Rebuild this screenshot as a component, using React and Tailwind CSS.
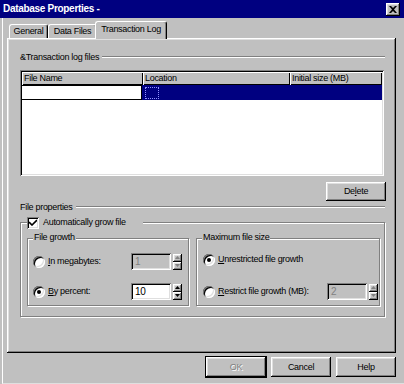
import React from "react";

const font = "font-['Liberation_Sans',Arial,sans-serif]";
const raised = "shadow-[inset_-1px_-1px_0_#000,inset_1px_1px_0_#fff,inset_-2px_-2px_0_#808080,inset_2px_2px_0_#dfdfdf]";
const sunken = "shadow-[inset_1px_1px_0_#808080,inset_-1px_-1px_0_#fff,inset_2px_2px_0_#000,inset_-2px_-2px_0_#dfdfdf]";
const etched = "border border-[#808080] shadow-[inset_1px_1px_0_#fff,1px_1px_0_#fff]";

const HeaderLine = ({ children }) => (
    <div className="flex items-center h-[12px]">
        <span className="leading-none">{children}</span>
        <div className="flex-1 ml-[3px] h-[2px] border-t border-t-[#808080] border-b border-b-white" />
    </div>
);

const Tab = ({ children, w, selected }) => (
    <div
        className={`${w} ${selected ? "h-[18px] -mx-[2px] -mb-[1px] pb-[2px]" : "h-[14px]"} relative z-10 bg-[#c0c0c0] rounded-t-[3px] border-t border-l border-t-white border-l-white border-r border-r-black shadow-[inset_-1px_0_0_#808080] flex items-center justify-center leading-none`}
    >
        {children}
    </div>
);

const Arrow = ({ up, disabled }) => (
    <div className={`h-[8px] bg-[#c0c0c0] ${raised} flex items-center justify-center`}>
        <svg width="5" height="3" viewBox="0 0 5 3">
            <path d={up ? "M2.5 0L5 3H0z" : "M0 0h5L2.5 3z"} fill={disabled ? "#808080" : "#000"} />
        </svg>
    </div>
);

const Spin = ({ value, disabled }) => (
    <div className="flex items-center gap-[2px]">
        <div
            className={`w-[40px] h-[17px] ${sunken} ${disabled ? "bg-[#c0c0c0] text-[#808080]" : "bg-white text-black"} flex items-center px-[4px] text-[10px] leading-none`}
        >
            {value}
        </div>
        <div className="flex flex-col w-[9px]">
            <Arrow up disabled={disabled} />
            <Arrow disabled={disabled} />
        </div>
    </div>
);

const Radio = ({ checked, children }) => (
    <div className="flex items-center">
        <span className={`w-[12px] h-[12px] shrink-0 rounded-full bg-white ${sunken} flex items-center justify-center`}>
            {checked && <span className="w-[4px] h-[4px] rounded-full bg-black" />}
        </span>
        <span className="ml-[3px] leading-none">{children}</span>
    </div>
);

const HeadCell = ({ w, children }) => (
    <div className={`${w} h-full flex items-center pl-[2px] leading-none shadow-[inset_1px_1px_0_#fff,inset_-1px_-1px_0_#000]`}>
        {children}
    </div>
);

const Button = ({ children, disabled, isDefault, w = "w-[60px]", h = "h-[20px]" }) => (
    <div
        className={`${w} ${h} bg-[#c0c0c0] ${raised} ${isDefault ? "outline outline-1 outline-black" : ""} flex items-center justify-center leading-none ${disabled ? "text-[#808080] [text-shadow:1px_1px_0_#fff]" : ""}`}
    >
        {children}
    </div>
);

const App = () => {
    return (
        <div className={`w-[404px] h-[384px] bg-[#c0c0c0] flex flex-col text-[9px] tracking-[-0.3px] whitespace-nowrap text-black ${font} overflow-hidden`}>
            {/* Title bar */}
            <div className="h-[18px] shrink-0 bg-[#000080] flex items-center justify-between pl-[3px] pr-[4px]">
                <span className="text-white font-bold text-[10px] leading-none">Database Properties -</span>
                <div className={`w-[14px] h-[13px] bg-[#c0c0c0] ${raised} flex items-center justify-center`}>
                    <svg width="8" height="7" viewBox="0 0 8 7">
                        <path d="M0 0h2l2 2 2-2h2L5 3.5 8 7H6L4 5 2 7H0l3-3.5z" fill="#000" />
                    </svg>
                </div>
            </div>

            <div className="flex-1 flex flex-col ml-[2px] border-l border-l-white border-b border-b-[#dfdfdf] pl-[4px] pr-[8px] pt-[3px]">
                {/* Tabs */}
                <div className="flex items-end h-[17px] pl-[2px]">
                    <Tab w="w-[39px]">General</Tab>
                    <Tab w="w-[49px]">Data Files</Tab>
                    <Tab w="w-[72px]" selected>Transaction Log</Tab>
                </div>

                {/* Panel */}
                <div className={`h-[315px] ${raised} flex flex-col pl-[13px] pr-[11px] pt-[13px]`}>
                    <HeaderLine>&amp;Transaction log files</HeaderLine>

                    {/* Grid */}
                    <div className={`mt-[7px] mr-[1px] h-[106px] bg-white ${sunken} p-[2px] flex flex-col`}>
                        <div className="flex h-[13px] bg-[#c0c0c0]">
                            <HeadCell w="w-[121px]">File Name</HeadCell>
                            <HeadCell w="w-[147px]">Location</HeadCell>
                            <HeadCell w="flex-1">Initial size (MB)</HeadCell>
                        </div>
                        <div className="flex h-[15px] bg-[#000080]">
                            <div className="w-[121px] -ml-[1px] bg-white border border-black" />
                            <div className="w-[147px] flex items-center pl-[3px]">
                                <div className="w-[14px] h-[12px] border border-dotted border-[#9090ff]" />
                            </div>
                        </div>
                    </div>

                    <div className="mt-[6px] flex justify-end -mr-[1px]">
                        <Button h="h-[19px]">
                            De<u>l</u>ete
                        </Button>
                    </div>

                    <HeaderLine>File properties</HeaderLine>

                    {/* File properties group */}
                    <div className={`relative mt-[9px] h-[95px] ${etched} flex gap-[7px] pt-[15px] pl-[6px] pr-[4px]`}>
                        <div className="absolute -top-[7px] left-[6px] w-[116px] h-[13px] bg-[#c0c0c0] flex items-center">
                            <span className={`w-[12px] h-[12px] bg-white ${sunken} flex items-center justify-center`}>
                                <svg width="8" height="7" viewBox="0 0 8 7">
                                    <path d="M0 3l3 3 5-5" stroke="#000" strokeWidth="1.6" fill="none" />
                                </svg>
                            </span>
                            <span className="ml-[4px] leading-none">Automatically grow file</span>
                        </div>

                        {/* File growth */}
                        <div className={`relative w-[162px] h-[68px] ${etched} flex flex-col gap-[13px] pt-[14px] pl-[5px] pr-[6px]`}>
                            <span className="absolute -top-[6px] left-[5px] px-[1px] bg-[#c0c0c0] leading-none">File growth</span>
                            <div className="flex items-center justify-between h-[17px]">
                                <Radio>
                                    <u>I</u>n megabytes:
                                </Radio>
                                <Spin value="1" disabled />
                            </div>
                            <div className="flex items-center justify-between h-[17px]">
                                <Radio checked>
                                    <u>B</u>y percent:
                                </Radio>
                                <Spin value="10" />
                            </div>
                        </div>

                        {/* Maximum file size */}
                        <div className={`relative flex-1 h-[68px] ${etched} flex flex-col gap-[13px] pt-[12px] pl-[6px] pr-[1px]`}>
                            <span className="absolute -top-[6px] left-[5px] px-[1px] bg-[#c0c0c0] leading-none">Maximum file size</span>
                            <div className="flex items-center h-[17px]">
                                <Radio checked>
                                    <u>U</u>nrestricted file growth
                                </Radio>
                            </div>
                            <div className="flex items-center justify-between h-[17px] mt-[2px]">
                                <Radio>
                                    <u>R</u>estrict file growth (MB):
                                </Radio>
                                <Spin value="2" disabled />
                            </div>
                        </div>
                    </div>
                </div>

                {/* Dialog buttons */}
                <div className="mt-[4px] flex justify-end gap-[5px]">
                    <Button disabled isDefault>OK</Button>
                    <Button>Cancel</Button>
                    <Button>Help</Button>
                </div>
            </div>
        </div>
    );
};

export default App;
